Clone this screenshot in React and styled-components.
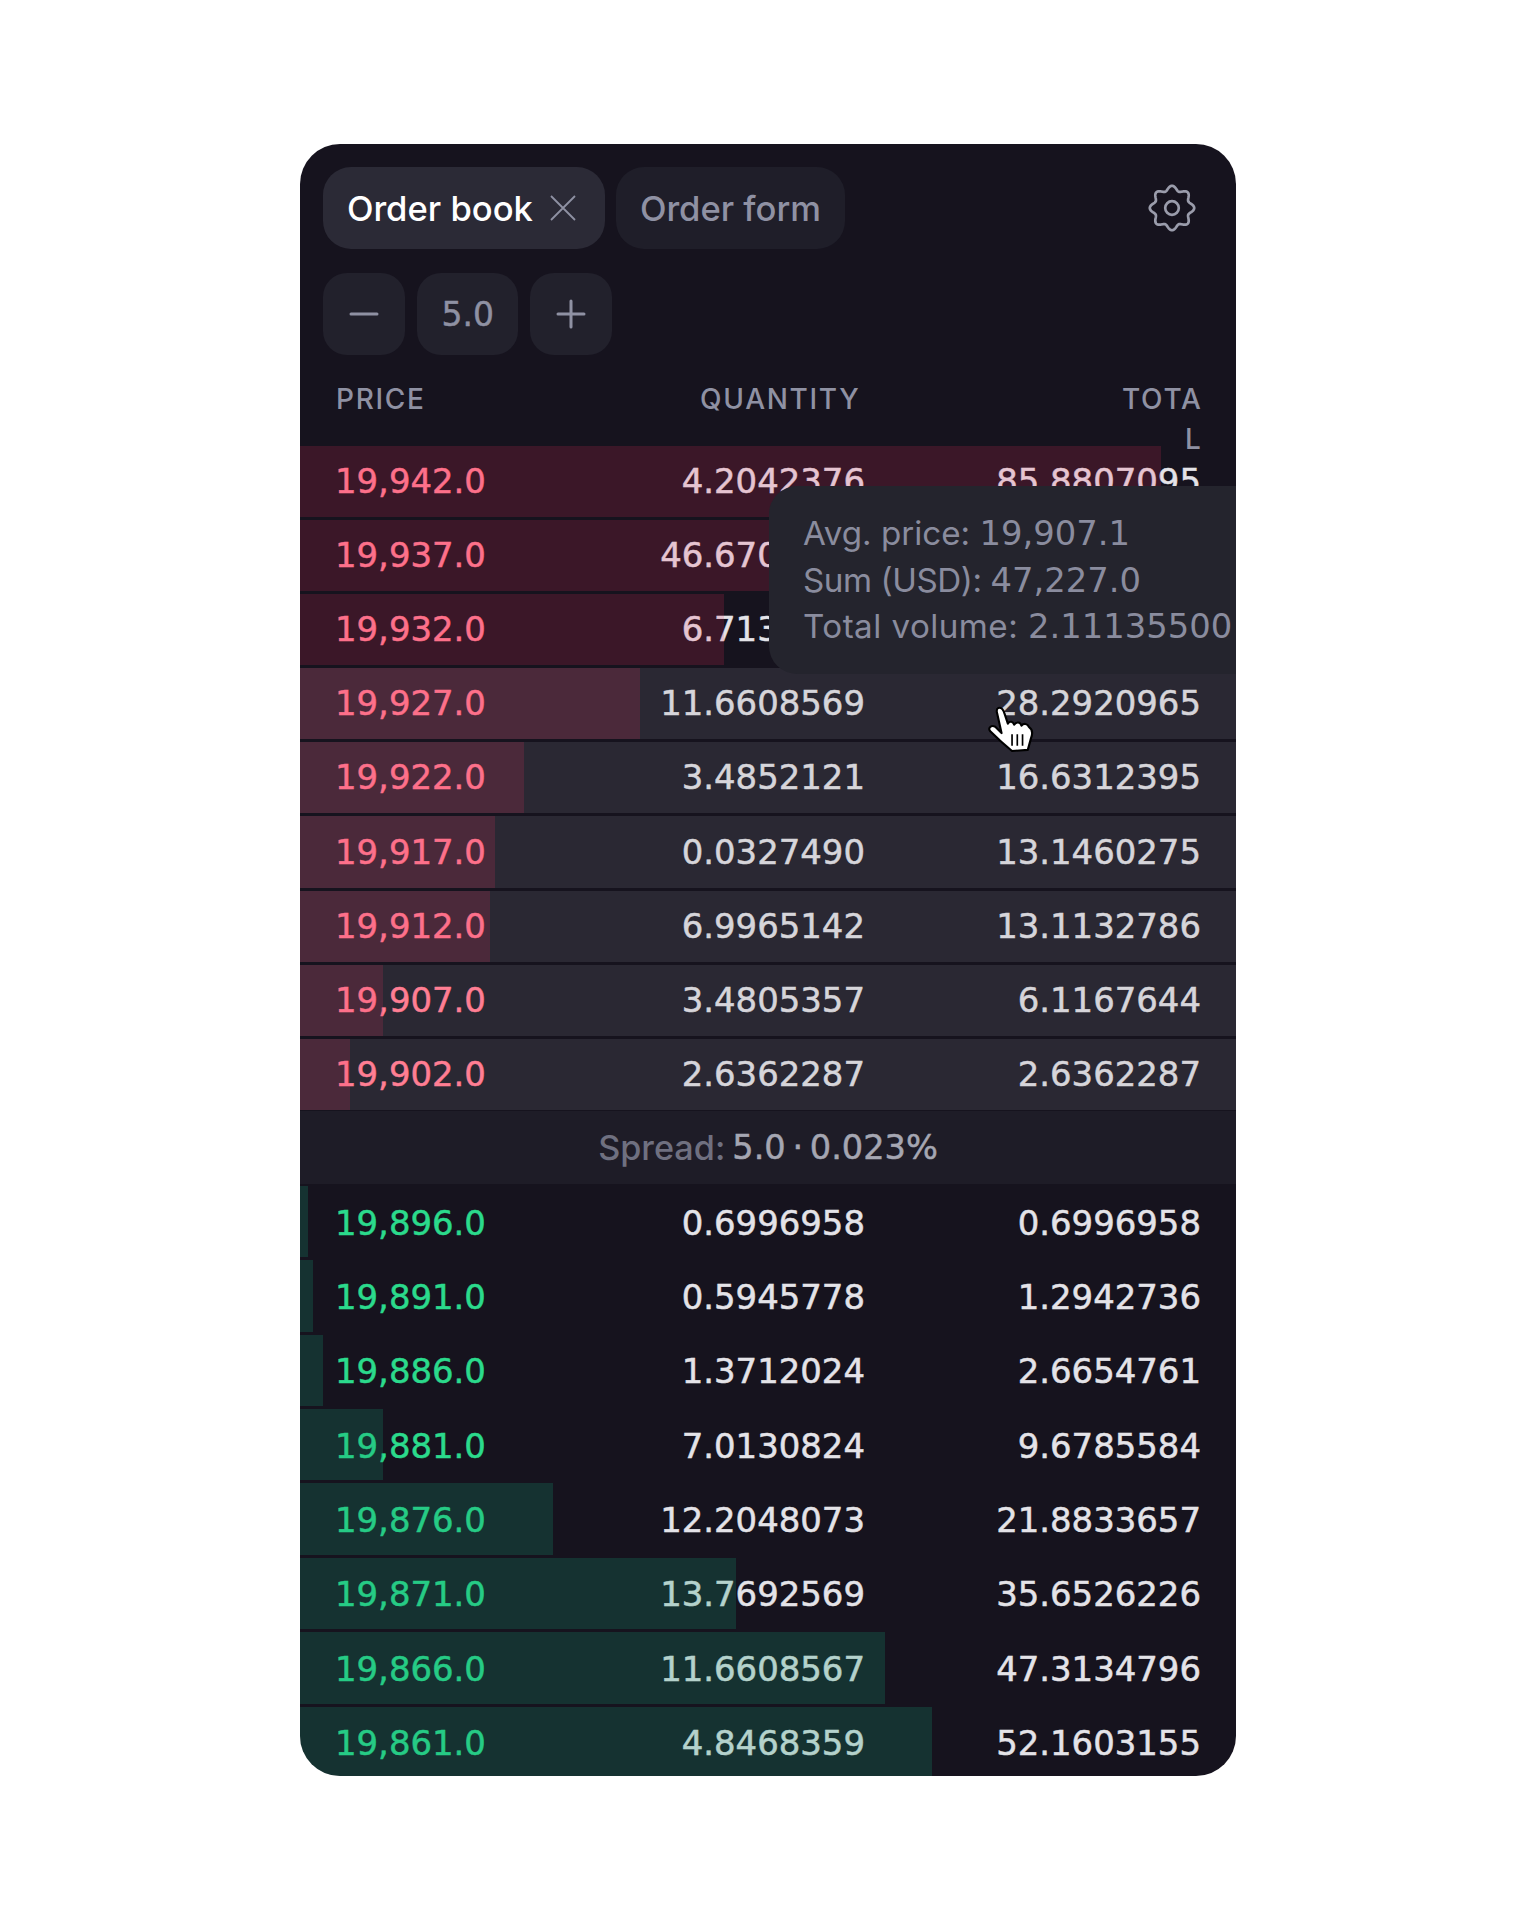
import React from "react";
import styled, { createGlobalStyle } from "styled-components";

const Global = createGlobalStyle`
  html, body { margin: 0; padding: 0; background: #fff; }
  body { font-family: "Inter", "Liberation Sans", sans-serif; }
`;

const NUM = `"DejaVu Sans", "Liberation Sans", sans-serif`;

const Card = styled.div`
  position: relative;
  width: 936px;
  height: 1632px;
  margin: 144px auto 0;
  background: #16131e;
  border-radius: 40px;
  overflow: hidden;
`;

const Toolbar = styled.div`
  display: flex;
  align-items: center;
  gap: 11.5px;
  padding: 23px 24px 0 23.4px;
`;

const Tab = styled.div`
  display: flex;
  align-items: center;
  gap: 14px;
  height: 82px;
  padding: 0 ${p => (p.$active ? "26px" : "24px")} 0 23.5px;
  border-radius: 28px;
  background: ${p => (p.$active ? "#2b2a36" : "#1f1e29")};
  color: ${p => (p.$active ? "#ffffff" : "#8f91a3")};
  font-size: 34.6px;
  font-weight: 500;
  white-space: nowrap;
`;

const GearSlot = styled.div`
  margin-left: auto;
  margin-right: 16px;
  display: flex;
`;

const Stepper = styled.div`
  display: flex;
  gap: 12px;
  padding: 24px 24px 0 23.4px;
`;

const StepButton = styled.div`
  display: flex;
  align-items: center;
  justify-content: center;
  height: 82px;
  width: ${p => (p.$value ? "100.5px" : "82px")};
  box-sizing: border-box;
  border-radius: 24px;
  background: #22212c;
  color: #8f91a3;
  font-family: ${NUM};
  font-size: 33px;
  -webkit-text-stroke: 0.45px currentColor;
`;

const Header = styled.div`
  display: grid;
  grid-template-columns: 1fr 1fr 342px;
  height: 91px;
  padding: 24px 33.5px 0 36px;
  box-sizing: border-box;
  color: #8f91a3;
  font-size: 28px;
  font-weight: 500;
  letter-spacing: 1.7px;
  line-height: 40px;
`;

const HeadCell = styled.div`
  text-align: ${p => (p.$right ? "right" : "left")};
`;

const TotalHead = styled(HeadCell)`
  position: relative;
  z-index: 1;
  justify-self: end;
  width: 84px;
  word-break: break-all;
`;

const Section = styled.div`
  display: flex;
  flex-direction: column;
  gap: 3px;
  margin-top: ${p => p.$top}px;
`;

const Row = styled.div`
  position: relative;
  display: grid;
  grid-template-columns: 1fr 1fr 336px;
  align-items: center;
  box-sizing: border-box;
  height: ${p => p.$h}px;
  padding: ${p => p.$shift || 0}px 35px 0;
  background: ${p => (p.$hover ? "#2a2833" : "transparent")};
  font-family: ${NUM};
  font-size: 33.9px;
  -webkit-text-stroke: 0.5px currentColor;
`;

const Price = styled.div`
  color: ${p => (p.$side === "ask" ? "#ff7e93" : "#2bda8c")};
`;

const Value = styled.div`
  text-align: right;
  color: ${p => (p.$hover ? "#d6d5da" : "#e4e3e8")};
`;

const DepthBar = styled.div`
  position: absolute;
  left: 0;
  top: 0;
  bottom: 0;
  pointer-events: none;
  background: ${p => (p.$side === "ask" ? "rgba(241, 50, 96, 0.17)" : "rgba(22, 155, 112, 0.23)")};
`;

const Spread = styled.div`
  display: flex;
  align-items: center;
  justify-content: center;
  gap: 7px;
  height: 73px;
  margin-top: 1px;
  background: #1e1c27;
  color: #6f7080;
  font-size: 34.2px;
  font-weight: 500;
  white-space: pre;
`;

const SpreadValue = styled.span`
  font-family: ${NUM};
  font-size: 33.6px;
  color: #a5a6b2;
  -webkit-text-stroke: 0.5px currentColor;
`;

const Tooltip = styled.div`
  position: absolute;
  z-index: 2;
  left: 469px;
  top: 342px;
  width: 520px;
  height: 188px;
  padding: 24px 34px;
  box-sizing: border-box;
  border-radius: 28px;
  background: #24242d;
  color: #8a8c9e;
  font-size: 33.2px;
  line-height: 46.7px;
  white-space: nowrap;
`;

const TipLine = styled.div`
  letter-spacing: ${p => p.$ls || 0}px;
`;

const TipNumber = styled.span`
  font-family: ${NUM};
  font-size: 33.8px;
  line-height: 0;
  letter-spacing: 0;
`;

const Pointer = styled.svg`
  position: absolute;
  z-index: 3;
  left: 669px;
  top: 545px;
`;

const asks = [
  ["19,942.0", "4.2042376", "85.8807095", 861, false],
  ["19,937.0", "46.6705124", "81.6764719", 640, false],
  ["19,932.0", "6.7130482", "35.0059595", 424, false],
  ["19,927.0", "11.6608569", "28.2920965", 340, true],
  ["19,922.0", "3.4852121", "16.6312395", 224, true],
  ["19,917.0", "0.0327490", "13.1460275", 195, true],
  ["19,912.0", "6.9965142", "13.1132786", 190, true],
  ["19,907.0", "3.4805357", "6.1167644", 83, true],
  ["19,902.0", "2.6362287", "2.6362287", 50, true],
];

const bids = [
  ["19,896.0", "0.6996958", "0.6996958", 8],
  ["19,891.0", "0.5945778", "1.2942736", 13],
  ["19,886.0", "1.3712024", "2.6654761", 23],
  ["19,881.0", "7.0130824", "9.6785584", 83],
  ["19,876.0", "12.2048073", "21.8833657", 253],
  ["19,871.0", "13.7692569", "35.6526226", 436],
  ["19,866.0", "11.6608567", "47.3134796", 585],
  ["19,861.0", "4.8468359", "52.1603155", 632],
];

const gearPath = (() => {
  const pts = [];
  for (let i = 0; i < 240; i++) {
    const t = (i / 240) * Math.PI * 2;
    const r = 19.9 + 2.3 * Math.cos(8 * t);
    pts.push(`${(24 + r * Math.sin(t)).toFixed(2)} ${(24 - r * Math.cos(t)).toFixed(2)}`);
  }
  return `M${pts.join("L")}Z`;
})();

const Gear = () => (
  <svg width="48" height="48" viewBox="0 0 48 48" fill="none" stroke="#9a9cab" strokeWidth="2.7" strokeLinejoin="round">
    <path d={gearPath} />
    <circle cx="24" cy="24" r="6.8" />
  </svg>
);

const Close = () => (
  <svg width="32" height="32" viewBox="0 0 32 32" fill="none" stroke="#8f91a3" strokeWidth="1.8">
    <path d="M4 4L28 28M28 4L4 28" />
  </svg>
);

const Minus = () => (
  <svg width="30" height="30" viewBox="0 0 30 30" fill="none" stroke="#8f91a3" strokeWidth="3" strokeLinecap="round">
    <path d="M2 15H28" />
  </svg>
);

const Plus = () => (
  <svg width="30" height="30" viewBox="0 0 30 30" fill="none" stroke="#8f91a3" strokeWidth="3" strokeLinecap="round">
    <path d="M2 15H28M15 2V28" />
  </svg>
);

const Hand = () => (
  <Pointer width="84" height="73.5" viewBox="0 0 80 70">
    <path
      d="M28 18C31 17 33 20 34 24L37 33C39 30 42 31 43 34C45 31 49 31 50 35C52 32 56 33 57 36C60 38 61 42 59 47L56 58L41 59C36 55 28 48 20 40C18 37 21 34 25 36L31 42L27 24C26 21 26 19 28 18Z"
      fill="#fff"
      stroke="#000"
      strokeWidth="2"
      strokeLinejoin="round"
    />
    <path d="M41 43V54M46 43V54M51 43V54" stroke="#000" strokeWidth="1.6" fill="none" />
  </Pointer>
);

export default function App() {
  return (
    <>
      <Global />
      <Card>
        <Toolbar>
          <Tab $active>
            Order book
            <Close />
          </Tab>
          <Tab>Order form</Tab>
          <GearSlot>
            <Gear />
          </GearSlot>
        </Toolbar>
        <Stepper>
          <StepButton>
            <Minus />
          </StepButton>
          <StepButton $value>5.0</StepButton>
          <StepButton>
            <Plus />
          </StepButton>
        </Stepper>
        <Header>
          <HeadCell>PRICE</HeadCell>
          <HeadCell $right>QUANTITY</HeadCell>
          <TotalHead $right>TOTAL</TotalHead>
        </Header>
        <Section $top={0}>
          {asks.map(([price, qty, total, bar, hover]) => (
            <Row key={price} $h={71.1} $hover={hover}>
              <Price $side="ask">{price}</Price>
              <Value $hover={hover}>{qty}</Value>
              <Value $hover={hover}>{total}</Value>
              <DepthBar $side="ask" style={{ width: bar }} />
            </Row>
          ))}
        </Section>
        <Spread>
          <span>Spread:</span>
          <SpreadValue>5.0{"\u2009·\u2009"}0.023%</SpreadValue>
        </Spread>
        <Section $top={2}>
          {bids.map(([price, qty, total, bar]) => (
            <Row key={price} $h={71.4} $shift={3}>
              <Price $side="bid">{price}</Price>
              <Value>{qty}</Value>
              <Value>{total}</Value>
              <DepthBar $side="bid" style={{ width: bar }} />
            </Row>
          ))}
        </Section>
        <Tooltip>
          <TipLine>Avg. price: <TipNumber>19,907.1</TipNumber></TipLine>
          <TipLine $ls={-0.45}>Sum (USD): <TipNumber>47,227.0</TipNumber></TipLine>
          <TipLine $ls={0.45}>Total volume: <TipNumber>2.11135500</TipNumber></TipLine>
        </Tooltip>
        <Hand />
      </Card>
    </>
  );
}
